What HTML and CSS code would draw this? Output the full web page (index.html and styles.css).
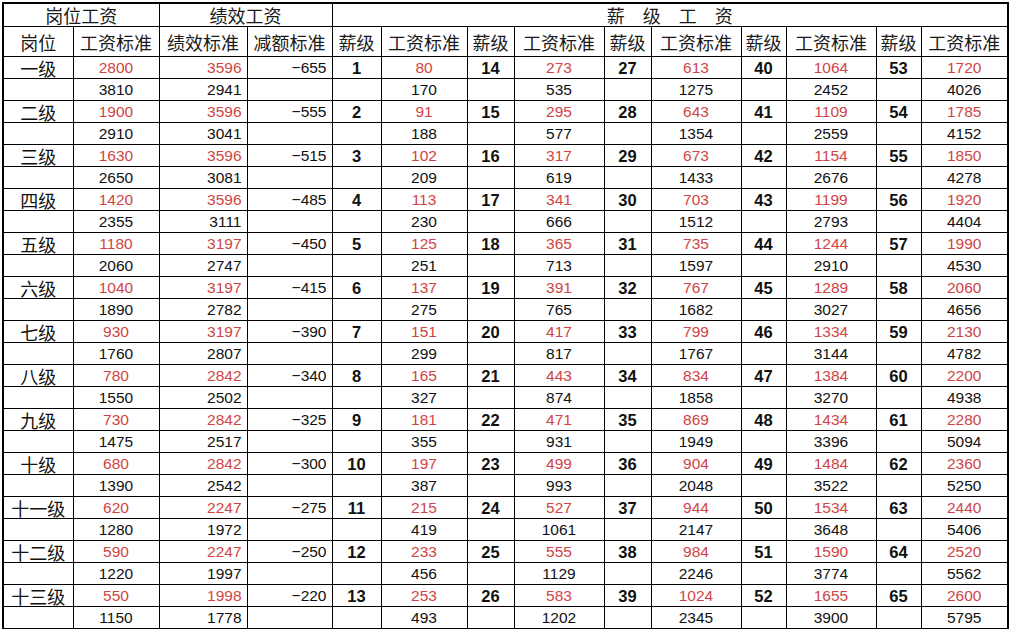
FILE: index.html
```html
<!DOCTYPE html>
<html lang="zh">
<head>
<meta charset="utf-8">
<title>工资表</title>
<link rel="stylesheet" href="styles.css">
</head>
<body>
<table class="sheet">
<colgroup>
<col class="c70"><col class="c86"><col class="c88"><col class="c85">
<col class="c49"><col class="c86"><col class="c47"><col class="c90"><col class="c47"><col class="c90"><col class="c45"><col class="c90"><col class="c45"><col class="c87">
</colgroup>
<tr class="h1"><td colspan="2">岗位工资</td><td colspan="2">绩效工资</td><td colspan="10">薪　级　工　资</td></tr>
<tr class="h2"><td>岗位</td><td>工资标准</td><td>绩效标准</td><td>减额标准</td><td>薪级</td><td>工资标准</td><td>薪级</td><td>工资标准</td><td>薪级</td><td>工资标准</td><td>薪级</td><td>工资标准</td><td>薪级</td><td>工资标准</td></tr>
<tr><td class="lab">一级</td><td class="r">2800</td><td class="r rt">3596</td><td class="rt">−655</td><td class="b">1</td><td class="r">80</td><td class="b">14</td><td class="r">273</td><td class="b">27</td><td class="r">613</td><td class="b">40</td><td class="r">1064</td><td class="b">53</td><td class="r">1720</td></tr>
<tr><td></td><td>3810</td><td class="rt">2941</td><td></td><td></td><td>170</td><td></td><td>535</td><td></td><td>1275</td><td></td><td>2452</td><td></td><td>4026</td></tr>
<tr><td class="lab">二级</td><td class="r">1900</td><td class="r rt">3596</td><td class="rt">−555</td><td class="b">2</td><td class="r">91</td><td class="b">15</td><td class="r">295</td><td class="b">28</td><td class="r">643</td><td class="b">41</td><td class="r">1109</td><td class="b">54</td><td class="r">1785</td></tr>
<tr><td></td><td>2910</td><td class="rt">3041</td><td></td><td></td><td>188</td><td></td><td>577</td><td></td><td>1354</td><td></td><td>2559</td><td></td><td>4152</td></tr>
<tr><td class="lab">三级</td><td class="r">1630</td><td class="r rt">3596</td><td class="rt">−515</td><td class="b">3</td><td class="r">102</td><td class="b">16</td><td class="r">317</td><td class="b">29</td><td class="r">673</td><td class="b">42</td><td class="r">1154</td><td class="b">55</td><td class="r">1850</td></tr>
<tr><td></td><td>2650</td><td class="rt">3081</td><td></td><td></td><td>209</td><td></td><td>619</td><td></td><td>1433</td><td></td><td>2676</td><td></td><td>4278</td></tr>
<tr><td class="lab">四级</td><td class="r">1420</td><td class="r rt">3596</td><td class="rt">−485</td><td class="b">4</td><td class="r">113</td><td class="b">17</td><td class="r">341</td><td class="b">30</td><td class="r">703</td><td class="b">43</td><td class="r">1199</td><td class="b">56</td><td class="r">1920</td></tr>
<tr><td></td><td>2355</td><td class="rt">3111</td><td></td><td></td><td>230</td><td></td><td>666</td><td></td><td>1512</td><td></td><td>2793</td><td></td><td>4404</td></tr>
<tr><td class="lab">五级</td><td class="r">1180</td><td class="r rt">3197</td><td class="rt">−450</td><td class="b">5</td><td class="r">125</td><td class="b">18</td><td class="r">365</td><td class="b">31</td><td class="r">735</td><td class="b">44</td><td class="r">1244</td><td class="b">57</td><td class="r">1990</td></tr>
<tr><td></td><td>2060</td><td class="rt">2747</td><td></td><td></td><td>251</td><td></td><td>713</td><td></td><td>1597</td><td></td><td>2910</td><td></td><td>4530</td></tr>
<tr><td class="lab">六级</td><td class="r">1040</td><td class="r rt">3197</td><td class="rt">−415</td><td class="b">6</td><td class="r">137</td><td class="b">19</td><td class="r">391</td><td class="b">32</td><td class="r">767</td><td class="b">45</td><td class="r">1289</td><td class="b">58</td><td class="r">2060</td></tr>
<tr><td></td><td>1890</td><td class="rt">2782</td><td></td><td></td><td>275</td><td></td><td>765</td><td></td><td>1682</td><td></td><td>3027</td><td></td><td>4656</td></tr>
<tr><td class="lab">七级</td><td class="r">930</td><td class="r rt">3197</td><td class="rt">−390</td><td class="b">7</td><td class="r">151</td><td class="b">20</td><td class="r">417</td><td class="b">33</td><td class="r">799</td><td class="b">46</td><td class="r">1334</td><td class="b">59</td><td class="r">2130</td></tr>
<tr><td></td><td>1760</td><td class="rt">2807</td><td></td><td></td><td>299</td><td></td><td>817</td><td></td><td>1767</td><td></td><td>3144</td><td></td><td>4782</td></tr>
<tr><td class="lab">八级</td><td class="r">780</td><td class="r rt">2842</td><td class="rt">−340</td><td class="b">8</td><td class="r">165</td><td class="b">21</td><td class="r">443</td><td class="b">34</td><td class="r">834</td><td class="b">47</td><td class="r">1384</td><td class="b">60</td><td class="r">2200</td></tr>
<tr><td></td><td>1550</td><td class="rt">2502</td><td></td><td></td><td>327</td><td></td><td>874</td><td></td><td>1858</td><td></td><td>3270</td><td></td><td>4938</td></tr>
<tr><td class="lab">九级</td><td class="r">730</td><td class="r rt">2842</td><td class="rt">−325</td><td class="b">9</td><td class="r">181</td><td class="b">22</td><td class="r">471</td><td class="b">35</td><td class="r">869</td><td class="b">48</td><td class="r">1434</td><td class="b">61</td><td class="r">2280</td></tr>
<tr><td></td><td>1475</td><td class="rt">2517</td><td></td><td></td><td>355</td><td></td><td>931</td><td></td><td>1949</td><td></td><td>3396</td><td></td><td>5094</td></tr>
<tr><td class="lab">十级</td><td class="r">680</td><td class="r rt">2842</td><td class="rt">−300</td><td class="b">10</td><td class="r">197</td><td class="b">23</td><td class="r">499</td><td class="b">36</td><td class="r">904</td><td class="b">49</td><td class="r">1484</td><td class="b">62</td><td class="r">2360</td></tr>
<tr><td></td><td>1390</td><td class="rt">2542</td><td></td><td></td><td>387</td><td></td><td>993</td><td></td><td>2048</td><td></td><td>3522</td><td></td><td>5250</td></tr>
<tr><td class="lab">十一级</td><td class="r">620</td><td class="r rt">2247</td><td class="rt">−275</td><td class="b">11</td><td class="r">215</td><td class="b">24</td><td class="r">527</td><td class="b">37</td><td class="r">944</td><td class="b">50</td><td class="r">1534</td><td class="b">63</td><td class="r">2440</td></tr>
<tr><td></td><td>1280</td><td class="rt">1972</td><td></td><td></td><td>419</td><td></td><td>1061</td><td></td><td>2147</td><td></td><td>3648</td><td></td><td>5406</td></tr>
<tr><td class="lab">十二级</td><td class="r">590</td><td class="r rt">2247</td><td class="rt">−250</td><td class="b">12</td><td class="r">233</td><td class="b">25</td><td class="r">555</td><td class="b">38</td><td class="r">984</td><td class="b">51</td><td class="r">1590</td><td class="b">64</td><td class="r">2520</td></tr>
<tr><td></td><td>1220</td><td class="rt">1997</td><td></td><td></td><td>456</td><td></td><td>1129</td><td></td><td>2246</td><td></td><td>3774</td><td></td><td>5562</td></tr>
<tr><td class="lab">十三级</td><td class="r">550</td><td class="r rt">1998</td><td class="rt">−220</td><td class="b">13</td><td class="r">253</td><td class="b">26</td><td class="r">583</td><td class="b">39</td><td class="r">1024</td><td class="b">52</td><td class="r">1655</td><td class="b">65</td><td class="r">2600</td></tr>
<tr><td></td><td>1150</td><td class="rt">1778</td><td></td><td></td><td>493</td><td></td><td>1202</td><td></td><td>2345</td><td></td><td>3900</td><td></td><td>5795</td></tr>
</table>
</body>
</html>
```
FILE: styles.css
```css
html, body {
  margin: 0;
  padding: 0;
  background: #fff;
}
.sheet {
  margin: 2px 0 0 2px;
  border-collapse: collapse;
  table-layout: fixed;
  width: 1005px;
  border: 2px solid #000;
  font-family: "Liberation Sans", Arial, sans-serif;
  font-size: 15.5px;
  color: #111;
}
.c70 { width: 70px; }
.c86 { width: 86px; }
.c88 { width: 88px; }
.c85 { width: 85px; }
.c49 { width: 49px; }
.c47 { width: 47px; }
.c90 { width: 90px; }
.c45 { width: 45px; }
.c87 { width: 87px; }
.sheet td {
  border: 1px solid #000;
  padding: 0;
  height: 21px;
  line-height: 18px;
  text-align: center;
  vertical-align: middle;
  white-space: nowrap;
}
.sheet .h1 td {
  height: 22px;
  font-family: "Noto Sans CJK SC", sans-serif;
  font-size: 18px;
  line-height: 20px;
  color: #1a1a1a;
}
.sheet .h2 td {
  height: 30px;
  font-family: "Noto Sans CJK SC", sans-serif;
  font-size: 18px;
  line-height: 20px;
  padding-top: 1px;
  box-sizing: border-box;
  color: #1a1a1a;
}
.sheet td.lab {
  font-family: "Noto Sans CJK SC", sans-serif;
  font-size: 18px;
  line-height: 18px;
  padding-top: 1px;
  box-sizing: border-box;
}
.sheet td.r {
  color: #d04444;
}
.sheet td.b {
  font-weight: bold;
  font-size: 16.5px;
}
.sheet td.rt {
  text-align: right;
  padding-right: 5px;
}
```
